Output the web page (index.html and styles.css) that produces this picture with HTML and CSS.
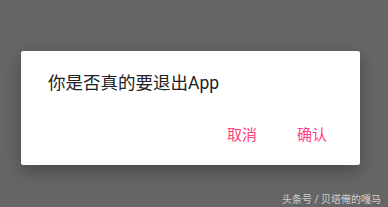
FILE: index.html
```html
<!DOCTYPE html>
<html lang="zh-CN">
<head>
<meta charset="utf-8">
<link rel="stylesheet" href="styles.css">
</head>
<body>
<div class="screen">
  <div class="dialog">
    <div class="title">你是否真的要退出App</div>
    <div class="actions">
      <span class="btn">取消</span>
      <span class="btn">确认</span>
    </div>
  </div>
  <div class="watermark">头条号 / 贝塔俺的嘎马</div>
</div>
</body>
</html>
```
FILE: styles.css
```css
html, body {
  margin: 0;
  padding: 0;
}
body {
  background: #666666;
  width: 388px;
  height: 207px;
  overflow: hidden;
  font-family: Roboto, "Noto Sans CJK SC", sans-serif;
}
.screen {
  display: flex;
  flex-direction: column;
  padding-top: 51px;
  padding-left: 21px;
}
.dialog {
  width: 339px;
  height: 114px;
  box-sizing: border-box;
  background: #ffffff;
  border-radius: 2px;
  box-shadow: 0 6px 18px rgba(0, 0, 0, 0.3);
  padding: 20px 33px 0 27px;
  display: flex;
  flex-direction: column;
}
.title {
  font-size: 17.5px;
  line-height: 24px;
  color: #212121;
}
.actions {
  display: flex;
  justify-content: flex-end;
  gap: 40px;
  margin-top: 30px;
}
.btn {
  font-size: 15px;
  line-height: 20px;
  color: #ff4081;
}
.watermark {
  align-self: flex-end;
  margin-top: 28px;
  margin-right: 7px;
  font-size: 10px;
  line-height: 13px;
  color: rgba(255, 255, 255, 0.7);
}
```
